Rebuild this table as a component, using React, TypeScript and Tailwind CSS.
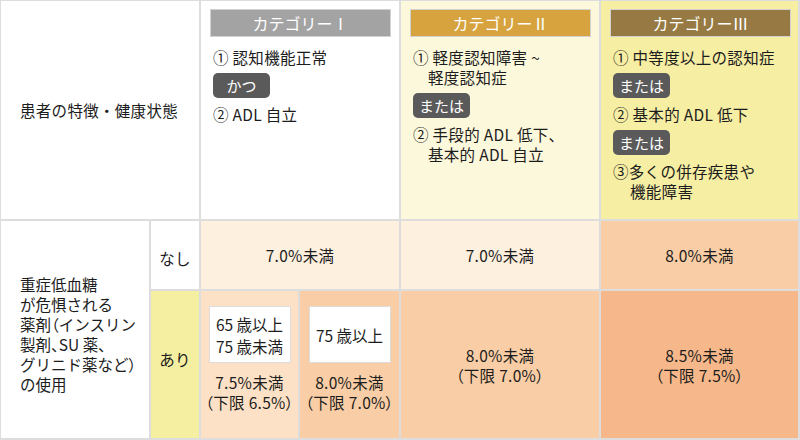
import type { ReactNode } from 'react';

function Badge({ children }: { children: ReactNode }) {
  return (
    <div className="my-[6px] flex h-[25px] w-[57px] items-center justify-center rounded-[5px] bg-[#5a5a5a] text-[15px] leading-none tracking-normal text-white">
      {children}
    </div>
  );
}

function CategoryBar({ label, color }: { label: string; color: string }) {
  return (
    <div
      className={`flex h-[28px] w-[181px] items-center justify-center border border-[#d2d2d2] text-[16px] leading-none tracking-normal text-white ${color}`}
    >
      {label}
    </div>
  );
}

// proportional width for the wide brackets and commas
function P({ children }: { children: ReactNode }) {
  return <span className="[font-feature-settings:'palt']">{children}</span>;
}

function AgeCell({ bg, age, goal, floor }: { bg: string; age: ReactNode; goal: string; floor: string }) {
  return (
    <div className={`flex flex-col items-center pt-[15px] ${bg}`}>
      <div className="flex h-[57px] w-[82px] items-center justify-center border border-[#dcdcdc] bg-white text-center leading-[22px] tracking-normal">
        {age}
      </div>
      <div className="mt-[9px] text-center leading-5 whitespace-nowrap">
        {goal}
        <br />
        <P>{floor}</P>
      </div>
    </div>
  );
}

export default function App() {
  return (
    <div
      className="grid h-[440px] w-[800px] grid-cols-[148px_48px_97px_99px_198px_197px] grid-rows-[218px_68px_147px] gap-[2px] bg-[#dddddd] pt-px pl-px pr-[2px] pb-[2px] text-[15.5px] leading-5 tracking-[0.3px] text-[#1c1c1c]"
      style={{ fontFamily: '"Noto Sans CJK JP", "Noto Sans", sans-serif' }}
    >
      {/* header row */}
      <div className="col-span-2 flex items-center bg-white pl-[19px]">患者の特徴・健康状態</div>

      <div className="col-span-2 bg-white px-[9px] pt-[8px]">
        <CategoryBar label="カテゴリーⅠ" color="bg-[#a3a3a3]" />
        <div className="mt-[10px] pl-[3px]">
          <div>① 認知機能正常</div>
          <Badge>かつ</Badge>
          <div>② ADL 自立</div>
        </div>
      </div>

      <div className="bg-[#fcf8dc] px-[9px] pt-[8px]">
        <CategoryBar label="カテゴリーⅡ" color="bg-[#d6a33e]" />
        <div className="mt-[10px] pl-[3px]">
          <div>
            ① 軽度認知障害 ~
            <br />
            <span className="pl-[15px]">軽度認知症</span>
          </div>
          <Badge>または</Badge>
          <div>
            ② 手段的 ADL 低下、
            <br />
            <span className="pl-[15px]">基本的 ADL 自立</span>
          </div>
        </div>
      </div>

      <div className="bg-[#f6eea3] px-[9px] pt-[8px]">
        <CategoryBar label="カテゴリーⅢ" color="bg-[#977a43]" />
        <div className="mt-[10px] pl-[3px]">
          <div>① 中等度以上の認知症</div>
          <Badge>または</Badge>
          <div>② 基本的 ADL 低下</div>
          <Badge>または</Badge>
          <div>
            ③多くの併存疾患や
            <br />
            <span className="pl-[17px]">機能障害</span>
          </div>
        </div>
      </div>

      {/* medication rows */}
      <div className="row-span-2 flex items-center bg-white pl-[19px] pt-[8px] tracking-normal">
        <div className="whitespace-nowrap">
          重症低血糖
          <br />
          が危惧される
          <br />
          薬剤<P>（</P>インスリン
          <br />
          製剤<P>、</P>SU 薬<P>、</P>
          <br />
          グリニド薬など<P>）</P>
          <br />
          の使用
        </div>
      </div>

      <div className="flex items-center justify-center bg-white pt-[6px]">なし</div>
      <div className="col-span-2 flex items-center justify-center bg-[#fdf0df]">7.0%未満</div>
      <div className="flex items-center justify-center bg-[#fdf0df]">7.0%未満</div>
      <div className="flex items-center justify-center bg-[#f9cea6]">8.0%未満</div>

      <div className="flex items-center justify-center bg-[#f5efa1] pb-[12px]">あり</div>
      <AgeCell
        bg="bg-[#fde1c6]"
        age={
          <>
            65 歳以上
            <br />
            75 歳未満
          </>
        }
        goal="7.5%未満"
        floor="（下限 6.5%）"
      />
      <AgeCell bg="bg-[#f9cea6]" age="75 歳以上" goal="8.0%未満" floor="（下限 7.0%）" />
      <div className="flex items-center justify-center bg-[#f9cea6] text-center">
        <div>
          8.0%未満
          <br />
          <P>（下限 7.0%）</P>
        </div>
      </div>
      <div className="flex items-center justify-center bg-[#f6b88a] text-center">
        <div>
          8.5%未満
          <br />
          <P>（下限 7.5%）</P>
        </div>
      </div>
    </div>
  );
}
